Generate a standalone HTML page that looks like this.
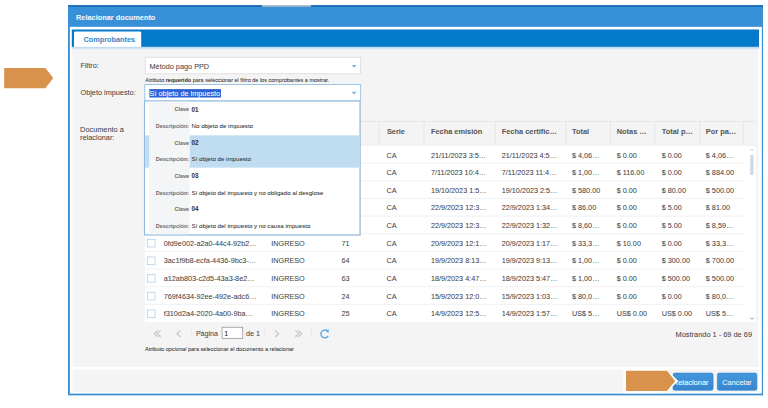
<!DOCTYPE html>
<html><head><meta charset="utf-8"><title>Relacionar documento</title>
<style>
html,body{margin:0;padding:0;background:#ffffff;width:768px;height:408px;overflow:hidden}
svg{display:block;font-family:"Liberation Sans",sans-serif}
#w{width:768px;height:408px}
</style></head><body>
<div id="w"><svg width="768" height="408" viewBox="0 0 768 408">
<rect width="768" height="408" fill="#fff"/>
<g>
<polygon points="4.2,67.9 45.4,67.9 53.3,78 45.4,88.2 4.2,88.2" fill="#d9924b" />
<rect x="68" y="5.2" width="695" height="390.2" fill="#3f8fd3" />
<rect x="69.9" y="26.6" width="691.9" height="367.0" fill="#ffffff" />
<rect x="68" y="5.2" width="695" height="21.400000000000002" fill="#3890d8" />
<rect x="68" y="5.2" width="695" height="1.8" fill="#206db7" />
<rect x="262" y="5.2" width="49" height="1.4" fill="#d6d6d6" />
<text x="76" y="20" font-size="7.36" fill="#f4f8fc" stroke="#f4f8fc" stroke-width="0.05" font-weight="bold" text-anchor="start" >Relacionar documento</text>
<rect x="71.8" y="29.5" width="687.2" height="17.4" fill="#0579ca" />
<path d="M74,46.9 L74,32.8 Q74,31.4 75.4,31.4 L139.8,31.4 Q141.2,31.4 141.2,32.8 L141.2,46.9 Z" fill="#ffffff"/>
<text x="83.6" y="41.9" font-size="7.3" fill="#3a87c6" stroke="#3a87c6" stroke-width="0.05" font-weight="bold" text-anchor="start" >Comprobantes</text>
<defs><linearGradient id="tg" x1="0" y1="0" x2="0" y2="1"><stop offset="0" stop-color="#b9d5ee"/><stop offset="1" stop-color="#e9f0f6"/></linearGradient><linearGradient id="bg" x1="0" y1="0" x2="0" y2="1"><stop offset="0" stop-color="#4497dc"/><stop offset="1" stop-color="#3686cf"/></linearGradient></defs>
<rect x="71.8" y="46.9" width="687.2" height="2.9" fill="url(#tg)" />
<rect x="72.5" y="49.8" width="685.8" height="317.2" fill="#f4f4f4" rx="1.5"/>
<rect x="72.5" y="49.8" width="685.8" height="4" fill="#f4f4f4" />
<rect x="72.5" y="369.5" width="686.0" height="22.5" fill="#f4f4f4" rx="1.5"/>
<text x="80.5" y="67.5" font-size="7.3" fill="#454545" stroke="#454545" stroke-width="0.05" font-weight="normal" text-anchor="start" >Filtro:</text>
<text x="80.5" y="95.4" font-size="7.3" fill="#454545" stroke="#454545" stroke-width="0.05" font-weight="normal" text-anchor="start" >Objeto impuesto:</text>
<text x="80.1" y="131.6" font-size="7.35" fill="#454545" stroke="#454545" stroke-width="0.05" font-weight="normal" text-anchor="start" >Documento a</text>
<text x="80.1" y="139.75" font-size="7.35" fill="#454545" stroke="#454545" stroke-width="0.05" font-weight="normal" text-anchor="start" >relacionar:</text>
<rect x="145.25" y="57.25" width="215.35" height="16.5" fill="#ffffff" stroke="#dcdcdc" stroke-width="0.8"/>
<text x="149.5" y="69.1" font-size="7.3" fill="#454545" stroke="#454545" stroke-width="0.05" font-weight="normal" text-anchor="start" >Método pago PPD</text>
<polygon points="351.6,65 356.6,65 354.1,67.8" fill="#80b4e0" />
<text x="145.25" y="81.5" font-size="5.5" fill="#333" stroke="#333" stroke-width="0.05" font-weight="normal" text-anchor="start" >Atributo <tspan font-weight="bold">requerido</tspan> para seleccionar el filtro de los comprobantes a mostrar.</text>
<rect x="144.75" y="84.5" width="215.85" height="16.5" fill="#ffffff" stroke="#9cc6e8" stroke-width="1"/>
<rect x="149.4" y="89.1" width="71.6" height="8.4" fill="#2b62d6" />
<text x="149.6" y="95.6" font-size="7.3" fill="#ffffff" stroke="#ffffff" stroke-width="0.05" font-weight="normal" text-anchor="start" >Sí objeto de impuesto</text>
<polygon points="351.6,91.8 356.6,91.8 354.1,94.6" fill="#80b4e0" />
<rect x="145" y="121.5" width="611" height="24" fill="#f4f4f4" />
<line x1="145" y1="121.5" x2="756" y2="121.5" stroke="#e2e2e2" stroke-width="0.8" />
<line x1="145" y1="145.5" x2="756" y2="145.5" stroke="#e2e2e2" stroke-width="0.8" />
<line x1="158" y1="121.5" x2="158" y2="145.5" stroke="#e2e2e2" stroke-width="0.8" />
<line x1="265" y1="121.5" x2="265" y2="145.5" stroke="#e2e2e2" stroke-width="0.8" />
<line x1="335" y1="121.5" x2="335" y2="145.5" stroke="#e2e2e2" stroke-width="0.8" />
<line x1="379.4" y1="121.5" x2="379.4" y2="145.5" stroke="#e2e2e2" stroke-width="0.8" />
<line x1="424" y1="121.5" x2="424" y2="145.5" stroke="#e2e2e2" stroke-width="0.8" />
<line x1="495.25" y1="121.5" x2="495.25" y2="145.5" stroke="#e2e2e2" stroke-width="0.8" />
<line x1="566" y1="121.5" x2="566" y2="145.5" stroke="#e2e2e2" stroke-width="0.8" />
<line x1="610.5" y1="121.5" x2="610.5" y2="145.5" stroke="#e2e2e2" stroke-width="0.8" />
<line x1="654.75" y1="121.5" x2="654.75" y2="145.5" stroke="#e2e2e2" stroke-width="0.8" />
<line x1="699.75" y1="121.5" x2="699.75" y2="145.5" stroke="#e2e2e2" stroke-width="0.8" />
<line x1="743.3" y1="121.5" x2="743.3" y2="145.5" stroke="#e2e2e2" stroke-width="0.8" />
<text x="386.9" y="134.3" font-size="7.4" fill="#585858" stroke="#585858" stroke-width="0.05" font-weight="bold" text-anchor="start" >Serie</text>
<text x="430.9" y="134.3" font-size="7.4" fill="#585858" stroke="#585858" stroke-width="0.05" font-weight="bold" text-anchor="start" >Fecha emisión</text>
<text x="501.75" y="134.3" font-size="7.4" fill="#585858" stroke="#585858" stroke-width="0.05" font-weight="bold" text-anchor="start" >Fecha certific…</text>
<text x="572" y="134.3" font-size="7.4" fill="#585858" stroke="#585858" stroke-width="0.05" font-weight="bold" text-anchor="start" >Total</text>
<text x="616.75" y="134.3" font-size="7.4" fill="#585858" stroke="#585858" stroke-width="0.05" font-weight="bold" text-anchor="start" >Notas …</text>
<text x="661.75" y="134.3" font-size="7.4" fill="#585858" stroke="#585858" stroke-width="0.05" font-weight="bold" text-anchor="start" >Total p…</text>
<text x="705.8" y="134.3" font-size="7.4" fill="#585858" stroke="#585858" stroke-width="0.05" font-weight="bold" text-anchor="start" >Por pa…</text>
<rect x="145" y="145.5" width="611" height="176.7" fill="#ffffff" />
<line x1="145" y1="163.15" x2="743.8" y2="163.15" stroke="#eeeeee" stroke-width="0.8" />
<rect x="147.4" y="151.1" width="7.6" height="7.6" fill="#ffffff" stroke="#b9d5ee" stroke-width="0.9"/>
<text x="163.75" y="157.5" font-size="7.25" fill="#454545" stroke="#454545" stroke-width="0.05" font-weight="normal" text-anchor="start" >4d1e5b0a-7c3e-4f2a-9d1b…</text>
<text x="271.25" y="157.5" font-size="7.25" fill="#454545" stroke="#454545" stroke-width="0.05" font-weight="normal" text-anchor="start" >INGRESO</text>
<text x="341.5" y="157.5" font-size="7.25" fill="#454545" stroke="#454545" stroke-width="0.05" font-weight="normal" text-anchor="start" >72</text>
<text x="386.6" y="157.5" font-size="7.25" fill="#454545" stroke="#454545" stroke-width="0.05" font-weight="normal" text-anchor="start" >CA</text>
<text x="430.9" y="157.5" font-size="7.25" fill="#454545" stroke="#454545" stroke-width="0.05" font-weight="normal" text-anchor="start" >21/11/2023 3:5…</text>
<text x="501.75" y="157.5" font-size="7.25" fill="#454545" stroke="#454545" stroke-width="0.05" font-weight="normal" text-anchor="start" >21/11/2023 4:5…</text>
<text x="572" y="157.5" font-size="7.25" fill="#454545" stroke="#454545" stroke-width="0.05" font-weight="normal" text-anchor="start" >$ 4,06…</text>
<text x="616.75" y="157.5" font-size="7.25" fill="#454545" stroke="#454545" stroke-width="0.05" font-weight="normal" text-anchor="start" >$ 0.00</text>
<text x="661.75" y="157.5" font-size="7.25" fill="#454545" stroke="#454545" stroke-width="0.05" font-weight="normal" text-anchor="start" >$ 0.00</text>
<text x="705.8" y="157.5" font-size="7.25" fill="#454545" stroke="#454545" stroke-width="0.05" font-weight="normal" text-anchor="start" >$ 4,06…</text>
<line x1="145" y1="180.8" x2="743.8" y2="180.8" stroke="#eeeeee" stroke-width="0.8" />
<rect x="147.4" y="168.75" width="7.6" height="7.6" fill="#ffffff" stroke="#b9d5ee" stroke-width="0.9"/>
<text x="163.75" y="175.15" font-size="7.25" fill="#454545" stroke="#454545" stroke-width="0.05" font-weight="normal" text-anchor="start" >9b2c4e7f-1a3d-4b8e-a6c2…</text>
<text x="271.25" y="175.15" font-size="7.25" fill="#454545" stroke="#454545" stroke-width="0.05" font-weight="normal" text-anchor="start" >INGRESO</text>
<text x="341.5" y="175.15" font-size="7.25" fill="#454545" stroke="#454545" stroke-width="0.05" font-weight="normal" text-anchor="start" >70</text>
<text x="386.6" y="175.15" font-size="7.25" fill="#454545" stroke="#454545" stroke-width="0.05" font-weight="normal" text-anchor="start" >CA</text>
<text x="430.9" y="175.15" font-size="7.25" fill="#454545" stroke="#454545" stroke-width="0.05" font-weight="normal" text-anchor="start" >7/11/2023 10:4…</text>
<text x="501.75" y="175.15" font-size="7.25" fill="#454545" stroke="#454545" stroke-width="0.05" font-weight="normal" text-anchor="start" >7/11/2023 11:4…</text>
<text x="572" y="175.15" font-size="7.25" fill="#454545" stroke="#454545" stroke-width="0.05" font-weight="normal" text-anchor="start" >$ 1,00…</text>
<text x="616.75" y="175.15" font-size="7.25" fill="#454545" stroke="#454545" stroke-width="0.05" font-weight="normal" text-anchor="start" >$ 116.00</text>
<text x="661.75" y="175.15" font-size="7.25" fill="#454545" stroke="#454545" stroke-width="0.05" font-weight="normal" text-anchor="start" >$ 0.00</text>
<text x="705.8" y="175.15" font-size="7.25" fill="#454545" stroke="#454545" stroke-width="0.05" font-weight="normal" text-anchor="start" >$ 884.00</text>
<line x1="145" y1="198.45000000000002" x2="743.8" y2="198.45000000000002" stroke="#eeeeee" stroke-width="0.8" />
<rect x="147.4" y="186.4" width="7.6" height="7.6" fill="#ffffff" stroke="#b9d5ee" stroke-width="0.9"/>
<text x="163.75" y="192.8" font-size="7.25" fill="#454545" stroke="#454545" stroke-width="0.05" font-weight="normal" text-anchor="start" >c7e8f1a2-5b6d-4c9e-8f3a…</text>
<text x="271.25" y="192.8" font-size="7.25" fill="#454545" stroke="#454545" stroke-width="0.05" font-weight="normal" text-anchor="start" >INGRESO</text>
<text x="341.5" y="192.8" font-size="7.25" fill="#454545" stroke="#454545" stroke-width="0.05" font-weight="normal" text-anchor="start" >69</text>
<text x="386.6" y="192.8" font-size="7.25" fill="#454545" stroke="#454545" stroke-width="0.05" font-weight="normal" text-anchor="start" >CA</text>
<text x="430.9" y="192.8" font-size="7.25" fill="#454545" stroke="#454545" stroke-width="0.05" font-weight="normal" text-anchor="start" >19/10/2023 1:5…</text>
<text x="501.75" y="192.8" font-size="7.25" fill="#454545" stroke="#454545" stroke-width="0.05" font-weight="normal" text-anchor="start" >19/10/2023 2:5…</text>
<text x="572" y="192.8" font-size="7.25" fill="#454545" stroke="#454545" stroke-width="0.05" font-weight="normal" text-anchor="start" >$ 580.00</text>
<text x="616.75" y="192.8" font-size="7.25" fill="#454545" stroke="#454545" stroke-width="0.05" font-weight="normal" text-anchor="start" >$ 0.00</text>
<text x="661.75" y="192.8" font-size="7.25" fill="#454545" stroke="#454545" stroke-width="0.05" font-weight="normal" text-anchor="start" >$ 80.00</text>
<text x="705.8" y="192.8" font-size="7.25" fill="#454545" stroke="#454545" stroke-width="0.05" font-weight="normal" text-anchor="start" >$ 500.00</text>
<line x1="145" y1="216.1" x2="743.8" y2="216.1" stroke="#eeeeee" stroke-width="0.8" />
<rect x="147.4" y="204.04999999999998" width="7.6" height="7.6" fill="#ffffff" stroke="#b9d5ee" stroke-width="0.9"/>
<text x="163.75" y="210.45" font-size="7.25" fill="#454545" stroke="#454545" stroke-width="0.05" font-weight="normal" text-anchor="start" >e2f3a4b5-6c7d-4e8f-9a0b…</text>
<text x="271.25" y="210.45" font-size="7.25" fill="#454545" stroke="#454545" stroke-width="0.05" font-weight="normal" text-anchor="start" >INGRESO</text>
<text x="341.5" y="210.45" font-size="7.25" fill="#454545" stroke="#454545" stroke-width="0.05" font-weight="normal" text-anchor="start" >68</text>
<text x="386.6" y="210.45" font-size="7.25" fill="#454545" stroke="#454545" stroke-width="0.05" font-weight="normal" text-anchor="start" >CA</text>
<text x="430.9" y="210.45" font-size="7.25" fill="#454545" stroke="#454545" stroke-width="0.05" font-weight="normal" text-anchor="start" >22/9/2023 12:3…</text>
<text x="501.75" y="210.45" font-size="7.25" fill="#454545" stroke="#454545" stroke-width="0.05" font-weight="normal" text-anchor="start" >22/9/2023 1:34…</text>
<text x="572" y="210.45" font-size="7.25" fill="#454545" stroke="#454545" stroke-width="0.05" font-weight="normal" text-anchor="start" >$ 86.00</text>
<text x="616.75" y="210.45" font-size="7.25" fill="#454545" stroke="#454545" stroke-width="0.05" font-weight="normal" text-anchor="start" >$ 0.00</text>
<text x="661.75" y="210.45" font-size="7.25" fill="#454545" stroke="#454545" stroke-width="0.05" font-weight="normal" text-anchor="start" >$ 5.00</text>
<text x="705.8" y="210.45" font-size="7.25" fill="#454545" stroke="#454545" stroke-width="0.05" font-weight="normal" text-anchor="start" >$ 81.00</text>
<line x1="145" y1="233.75" x2="743.8" y2="233.75" stroke="#eeeeee" stroke-width="0.8" />
<rect x="147.4" y="221.7" width="7.6" height="7.6" fill="#ffffff" stroke="#b9d5ee" stroke-width="0.9"/>
<text x="163.75" y="228.1" font-size="7.25" fill="#454545" stroke="#454545" stroke-width="0.05" font-weight="normal" text-anchor="start" >a1b2c3d4-e5f6-4a7b-8c9d…</text>
<text x="271.25" y="228.1" font-size="7.25" fill="#454545" stroke="#454545" stroke-width="0.05" font-weight="normal" text-anchor="start" >INGRESO</text>
<text x="341.5" y="228.1" font-size="7.25" fill="#454545" stroke="#454545" stroke-width="0.05" font-weight="normal" text-anchor="start" >67</text>
<text x="386.6" y="228.1" font-size="7.25" fill="#454545" stroke="#454545" stroke-width="0.05" font-weight="normal" text-anchor="start" >CA</text>
<text x="430.9" y="228.1" font-size="7.25" fill="#454545" stroke="#454545" stroke-width="0.05" font-weight="normal" text-anchor="start" >22/9/2023 12:3…</text>
<text x="501.75" y="228.1" font-size="7.25" fill="#454545" stroke="#454545" stroke-width="0.05" font-weight="normal" text-anchor="start" >22/9/2023 1:32…</text>
<text x="572" y="228.1" font-size="7.25" fill="#454545" stroke="#454545" stroke-width="0.05" font-weight="normal" text-anchor="start" >$ 8,60…</text>
<text x="616.75" y="228.1" font-size="7.25" fill="#454545" stroke="#454545" stroke-width="0.05" font-weight="normal" text-anchor="start" >$ 0.00</text>
<text x="661.75" y="228.1" font-size="7.25" fill="#454545" stroke="#454545" stroke-width="0.05" font-weight="normal" text-anchor="start" >$ 5.00</text>
<text x="705.8" y="228.1" font-size="7.25" fill="#454545" stroke="#454545" stroke-width="0.05" font-weight="normal" text-anchor="start" >$ 8,59…</text>
<line x1="145" y1="251.4" x2="743.8" y2="251.4" stroke="#eeeeee" stroke-width="0.8" />
<rect x="147.4" y="239.35" width="7.6" height="7.6" fill="#ffffff" stroke="#b9d5ee" stroke-width="0.9"/>
<text x="163.75" y="245.75" font-size="7.25" fill="#454545" stroke="#454545" stroke-width="0.05" font-weight="normal" text-anchor="start" >0fd9e002-a2a0-44c4-92b2…</text>
<text x="271.25" y="245.75" font-size="7.25" fill="#454545" stroke="#454545" stroke-width="0.05" font-weight="normal" text-anchor="start" >INGRESO</text>
<text x="341.5" y="245.75" font-size="7.25" fill="#454545" stroke="#454545" stroke-width="0.05" font-weight="normal" text-anchor="start" >71</text>
<text x="386.6" y="245.75" font-size="7.25" fill="#454545" stroke="#454545" stroke-width="0.05" font-weight="normal" text-anchor="start" >CA</text>
<text x="430.9" y="245.75" font-size="7.25" fill="#454545" stroke="#454545" stroke-width="0.05" font-weight="normal" text-anchor="start" >20/9/2023 12:1…</text>
<text x="501.75" y="245.75" font-size="7.25" fill="#454545" stroke="#454545" stroke-width="0.05" font-weight="normal" text-anchor="start" >20/9/2023 1:17…</text>
<text x="572" y="245.75" font-size="7.25" fill="#454545" stroke="#454545" stroke-width="0.05" font-weight="normal" text-anchor="start" >$ 33,3…</text>
<text x="616.75" y="245.75" font-size="7.25" fill="#454545" stroke="#454545" stroke-width="0.05" font-weight="normal" text-anchor="start" >$ 10.00</text>
<text x="661.75" y="245.75" font-size="7.25" fill="#454545" stroke="#454545" stroke-width="0.05" font-weight="normal" text-anchor="start" >$ 0.00</text>
<text x="705.8" y="245.75" font-size="7.25" fill="#454545" stroke="#454545" stroke-width="0.05" font-weight="normal" text-anchor="start" >$ 33,3…</text>
<line x1="145" y1="269.04999999999995" x2="743.8" y2="269.04999999999995" stroke="#eeeeee" stroke-width="0.8" />
<rect x="147.4" y="257.0" width="7.6" height="7.6" fill="#ffffff" stroke="#b9d5ee" stroke-width="0.9"/>
<text x="163.75" y="263.4" font-size="7.25" fill="#454545" stroke="#454545" stroke-width="0.05" font-weight="normal" text-anchor="start" >3ac1f9b8-ecfa-4436-9bc3-…</text>
<text x="271.25" y="263.4" font-size="7.25" fill="#454545" stroke="#454545" stroke-width="0.05" font-weight="normal" text-anchor="start" >INGRESO</text>
<text x="341.5" y="263.4" font-size="7.25" fill="#454545" stroke="#454545" stroke-width="0.05" font-weight="normal" text-anchor="start" >64</text>
<text x="386.6" y="263.4" font-size="7.25" fill="#454545" stroke="#454545" stroke-width="0.05" font-weight="normal" text-anchor="start" >CA</text>
<text x="430.9" y="263.4" font-size="7.25" fill="#454545" stroke="#454545" stroke-width="0.05" font-weight="normal" text-anchor="start" >19/9/2023 8:13…</text>
<text x="501.75" y="263.4" font-size="7.25" fill="#454545" stroke="#454545" stroke-width="0.05" font-weight="normal" text-anchor="start" >19/9/2023 9:13…</text>
<text x="572" y="263.4" font-size="7.25" fill="#454545" stroke="#454545" stroke-width="0.05" font-weight="normal" text-anchor="start" >$ 1,00…</text>
<text x="616.75" y="263.4" font-size="7.25" fill="#454545" stroke="#454545" stroke-width="0.05" font-weight="normal" text-anchor="start" >$ 0.00</text>
<text x="661.75" y="263.4" font-size="7.25" fill="#454545" stroke="#454545" stroke-width="0.05" font-weight="normal" text-anchor="start" >$ 300.00</text>
<text x="705.8" y="263.4" font-size="7.25" fill="#454545" stroke="#454545" stroke-width="0.05" font-weight="normal" text-anchor="start" >$ 700.00</text>
<line x1="145" y1="286.69999999999993" x2="743.8" y2="286.69999999999993" stroke="#eeeeee" stroke-width="0.8" />
<rect x="147.4" y="274.65" width="7.6" height="7.6" fill="#ffffff" stroke="#b9d5ee" stroke-width="0.9"/>
<text x="163.75" y="281.04999999999995" font-size="7.25" fill="#454545" stroke="#454545" stroke-width="0.05" font-weight="normal" text-anchor="start" >a12ab803-c2d5-43a3-8e2…</text>
<text x="271.25" y="281.04999999999995" font-size="7.25" fill="#454545" stroke="#454545" stroke-width="0.05" font-weight="normal" text-anchor="start" >INGRESO</text>
<text x="341.5" y="281.04999999999995" font-size="7.25" fill="#454545" stroke="#454545" stroke-width="0.05" font-weight="normal" text-anchor="start" >63</text>
<text x="386.6" y="281.04999999999995" font-size="7.25" fill="#454545" stroke="#454545" stroke-width="0.05" font-weight="normal" text-anchor="start" >CA</text>
<text x="430.9" y="281.04999999999995" font-size="7.25" fill="#454545" stroke="#454545" stroke-width="0.05" font-weight="normal" text-anchor="start" >18/9/2023 4:47…</text>
<text x="501.75" y="281.04999999999995" font-size="7.25" fill="#454545" stroke="#454545" stroke-width="0.05" font-weight="normal" text-anchor="start" >18/9/2023 5:47…</text>
<text x="572" y="281.04999999999995" font-size="7.25" fill="#454545" stroke="#454545" stroke-width="0.05" font-weight="normal" text-anchor="start" >$ 1,00…</text>
<text x="616.75" y="281.04999999999995" font-size="7.25" fill="#454545" stroke="#454545" stroke-width="0.05" font-weight="normal" text-anchor="start" >$ 0.00</text>
<text x="661.75" y="281.04999999999995" font-size="7.25" fill="#454545" stroke="#454545" stroke-width="0.05" font-weight="normal" text-anchor="start" >$ 500.00</text>
<text x="705.8" y="281.04999999999995" font-size="7.25" fill="#454545" stroke="#454545" stroke-width="0.05" font-weight="normal" text-anchor="start" >$ 500.00</text>
<line x1="145" y1="304.34999999999997" x2="743.8" y2="304.34999999999997" stroke="#eeeeee" stroke-width="0.8" />
<rect x="147.4" y="292.3" width="7.6" height="7.6" fill="#ffffff" stroke="#b9d5ee" stroke-width="0.9"/>
<text x="163.75" y="298.7" font-size="7.25" fill="#454545" stroke="#454545" stroke-width="0.05" font-weight="normal" text-anchor="start" >769f4634-92ee-492e-adc6…</text>
<text x="271.25" y="298.7" font-size="7.25" fill="#454545" stroke="#454545" stroke-width="0.05" font-weight="normal" text-anchor="start" >INGRESO</text>
<text x="341.5" y="298.7" font-size="7.25" fill="#454545" stroke="#454545" stroke-width="0.05" font-weight="normal" text-anchor="start" >24</text>
<text x="386.6" y="298.7" font-size="7.25" fill="#454545" stroke="#454545" stroke-width="0.05" font-weight="normal" text-anchor="start" >CA</text>
<text x="430.9" y="298.7" font-size="7.25" fill="#454545" stroke="#454545" stroke-width="0.05" font-weight="normal" text-anchor="start" >15/9/2023 12:0…</text>
<text x="501.75" y="298.7" font-size="7.25" fill="#454545" stroke="#454545" stroke-width="0.05" font-weight="normal" text-anchor="start" >15/9/2023 1:03…</text>
<text x="572" y="298.7" font-size="7.25" fill="#454545" stroke="#454545" stroke-width="0.05" font-weight="normal" text-anchor="start" >$ 80,0…</text>
<text x="616.75" y="298.7" font-size="7.25" fill="#454545" stroke="#454545" stroke-width="0.05" font-weight="normal" text-anchor="start" >$ 0.00</text>
<text x="661.75" y="298.7" font-size="7.25" fill="#454545" stroke="#454545" stroke-width="0.05" font-weight="normal" text-anchor="start" >$ 0.00</text>
<text x="705.8" y="298.7" font-size="7.25" fill="#454545" stroke="#454545" stroke-width="0.05" font-weight="normal" text-anchor="start" >$ 80,0…</text>
<rect x="147.4" y="309.95000000000005" width="7.6" height="7.6" fill="#ffffff" stroke="#b9d5ee" stroke-width="0.9"/>
<text x="163.75" y="316.35" font-size="7.25" fill="#454545" stroke="#454545" stroke-width="0.05" font-weight="normal" text-anchor="start" >f310d2a4-2020-4a00-9ba…</text>
<text x="271.25" y="316.35" font-size="7.25" fill="#454545" stroke="#454545" stroke-width="0.05" font-weight="normal" text-anchor="start" >INGRESO</text>
<text x="341.5" y="316.35" font-size="7.25" fill="#454545" stroke="#454545" stroke-width="0.05" font-weight="normal" text-anchor="start" >25</text>
<text x="386.6" y="316.35" font-size="7.25" fill="#454545" stroke="#454545" stroke-width="0.05" font-weight="normal" text-anchor="start" >CA</text>
<text x="430.9" y="316.35" font-size="7.25" fill="#454545" stroke="#454545" stroke-width="0.05" font-weight="normal" text-anchor="start" >14/9/2023 12:5…</text>
<text x="501.75" y="316.35" font-size="7.25" fill="#454545" stroke="#454545" stroke-width="0.05" font-weight="normal" text-anchor="start" >14/9/2023 1:57…</text>
<text x="572" y="316.35" font-size="7.25" fill="#454545" stroke="#454545" stroke-width="0.05" font-weight="normal" text-anchor="start" >US$ 5…</text>
<text x="616.75" y="316.35" font-size="7.25" fill="#454545" stroke="#454545" stroke-width="0.05" font-weight="normal" text-anchor="start" >US$ 0.00</text>
<text x="661.75" y="316.35" font-size="7.25" fill="#454545" stroke="#454545" stroke-width="0.05" font-weight="normal" text-anchor="start" >US$ 0.00</text>
<text x="705.8" y="316.35" font-size="7.25" fill="#454545" stroke="#454545" stroke-width="0.05" font-weight="normal" text-anchor="start" >US$ 5…</text>
<path d="M750.3,150.6 L752,148.9 L753.7,150.6" fill="none" stroke="#c4c4c4" stroke-width="0.8"/>
<rect x="750.2" y="155.1" width="3.4" height="19.9" fill="#cddbe8" rx="1"/>
<path d="M750.3,317.6 L752,319.3 L753.7,317.6" fill="none" stroke="#777" stroke-width="0.8"/>
<path d="M157.6,330.4 L154.2,333.7 L157.6,337.0" fill="none" stroke="#c6c6c6" stroke-width="1.2"/>
<path d="M160.6,330.4 L157.2,333.7 L160.6,337.0" fill="none" stroke="#c6c6c6" stroke-width="1.2"/>
<path d="M180.4,330.4 L177.0,333.7 L180.4,337.0" fill="none" stroke="#c6c6c6" stroke-width="1.2"/>
<line x1="191.7" y1="327.8" x2="191.7" y2="337" stroke="#e6e6e6" stroke-width="0.8" />
<text x="195.9" y="336.3" font-size="7.1" fill="#454545" stroke="#454545" stroke-width="0.05" font-weight="normal" text-anchor="start" >Página</text>
<rect x="222.1" y="327.25" width="20.65" height="11.25" fill="#ffffff" stroke="#8a8a8a" stroke-width="0.7"/>
<text x="224.2" y="336.3" font-size="7.1" fill="#222" stroke="#222" stroke-width="0.05" font-weight="normal" text-anchor="start" >1</text>
<text x="246" y="336.3" font-size="7.2" fill="#454545" stroke="#454545" stroke-width="0.05" font-weight="normal" text-anchor="start" >de 1</text>
<line x1="264.4" y1="327.8" x2="264.4" y2="337" stroke="#e6e6e6" stroke-width="0.8" />
<path d="M275.1,330.4 L278.6,333.7 L275.1,337.0" fill="none" stroke="#c6c6c6" stroke-width="1.2"/>
<path d="M295.4,330.4 L298.8,333.7 L295.4,337.0" fill="none" stroke="#c6c6c6" stroke-width="1.2"/>
<path d="M298.4,330.4 L301.8,333.7 L298.4,337.0" fill="none" stroke="#c6c6c6" stroke-width="1.2"/>
<line x1="311.4" y1="327.8" x2="311.4" y2="337" stroke="#e6e6e6" stroke-width="0.8" />
<path d="M327.6,331.2 A3.9,3.9 0 1 0 328.2,335.8" fill="none" stroke="#62aae6" stroke-width="1.4"/>
<polygon points="325.4,330.4 328.9,329.3 328.4,333.2" fill="#62aae6" />
<text x="752" y="336.5" font-size="7.4" fill="#454545" stroke="#454545" stroke-width="0.05" font-weight="normal" text-anchor="end" >Mostrando 1 - 69 de 69</text>
<text x="145" y="350.6" font-size="5.55" fill="#333" stroke="#333" stroke-width="0.05" font-weight="normal" text-anchor="start" >Atributo <tspan font-style="italic">opcional</tspan> para seleccionar el documento a relacionar</text>
<rect x="673" y="373.1" width="40.1" height="17.2" fill="url(#bg)" rx="1.8" stroke="#2f80c8" stroke-width="0.6"/>
<text x="708.6" y="384.6" font-size="7.5" fill="#ffffff" stroke="#ffffff" stroke-width="0.05" font-weight="normal" text-anchor="end" >Relacionar</text>
<rect x="717.35" y="373.1" width="39.55" height="17.2" fill="url(#bg)" rx="1.8" stroke="#2f80c8" stroke-width="0.6"/>
<text x="737.0" y="384.5" font-size="7.33" fill="#f4f8fc" stroke="#f4f8fc" stroke-width="0.05" font-weight="normal" text-anchor="middle" >Cancelar</text>
<polygon points="623.5,368.6 665.8,368.6 678.2,381 665.8,393.2 623.5,393.2" fill="#ffffff" />
<polygon points="626,370.8 667,370.8 675.2,381 667,391 626,391" fill="#d9924b" />
<rect x="145.5" y="102" width="215.5" height="133.9" fill="rgba(0,0,0,0.10)" />
<rect x="144.5" y="101" width="215.5" height="133.9" fill="#ffffff" stroke="#8fbbe0" stroke-width="1.1"/>
<rect x="145.1" y="135.35" width="214.3" height="32.3" fill="#bfdcf1" />
<rect x="149.2" y="101.6" width="40.6" height="132.70000000000002" fill="#f4f5f7" />
<text x="189.1" y="111.4" font-size="5.5" fill="#707070" stroke="#707070" stroke-width="0.05" font-weight="bold" text-anchor="end" >Clave</text>
<text x="189.1" y="128.05" font-size="5.5" fill="#707070" stroke="#707070" stroke-width="0.05" font-weight="bold" text-anchor="end" >Descripción:</text>
<text x="191.4" y="111.65" font-size="6.3" fill="#333" stroke="#333" stroke-width="0.05" font-weight="bold" text-anchor="start" >01</text>
<text x="191.6" y="128.15" font-size="6.15" fill="#333" stroke="#333" stroke-width="0.05" font-weight="normal" text-anchor="start" >No objeto de impuesto</text>
<text x="189.1" y="144.65" font-size="5.5" fill="#707070" stroke="#707070" stroke-width="0.05" font-weight="bold" text-anchor="end" >Clave</text>
<text x="189.1" y="161.3" font-size="5.5" fill="#707070" stroke="#707070" stroke-width="0.05" font-weight="bold" text-anchor="end" >Descripción:</text>
<text x="191.4" y="144.9" font-size="6.3" fill="#333" stroke="#333" stroke-width="0.05" font-weight="bold" text-anchor="start" >02</text>
<text x="191.6" y="161.4" font-size="6.15" fill="#333" stroke="#333" stroke-width="0.05" font-weight="normal" text-anchor="start" >Sí objeto de impuesto</text>
<text x="189.1" y="177.9" font-size="5.5" fill="#707070" stroke="#707070" stroke-width="0.05" font-weight="bold" text-anchor="end" >Clave</text>
<text x="189.1" y="194.55" font-size="5.5" fill="#707070" stroke="#707070" stroke-width="0.05" font-weight="bold" text-anchor="end" >Descripción:</text>
<text x="191.4" y="178.15" font-size="6.3" fill="#333" stroke="#333" stroke-width="0.05" font-weight="bold" text-anchor="start" >03</text>
<text x="191.6" y="194.65" font-size="6.15" fill="#333" stroke="#333" stroke-width="0.05" font-weight="normal" text-anchor="start" >Sí objeto del impuesto y no obligado al desglose</text>
<text x="189.1" y="211.15" font-size="5.5" fill="#707070" stroke="#707070" stroke-width="0.05" font-weight="bold" text-anchor="end" >Clave</text>
<text x="189.1" y="227.8" font-size="5.5" fill="#707070" stroke="#707070" stroke-width="0.05" font-weight="bold" text-anchor="end" >Descripción:</text>
<text x="191.4" y="211.4" font-size="6.3" fill="#333" stroke="#333" stroke-width="0.05" font-weight="bold" text-anchor="start" >04</text>
<text x="191.6" y="227.9" font-size="6.15" fill="#333" stroke="#333" stroke-width="0.05" font-weight="normal" text-anchor="start" >Sí objeto del impuesto y no causa impuesto</text>
</g>
</svg></div>
</body></html>
